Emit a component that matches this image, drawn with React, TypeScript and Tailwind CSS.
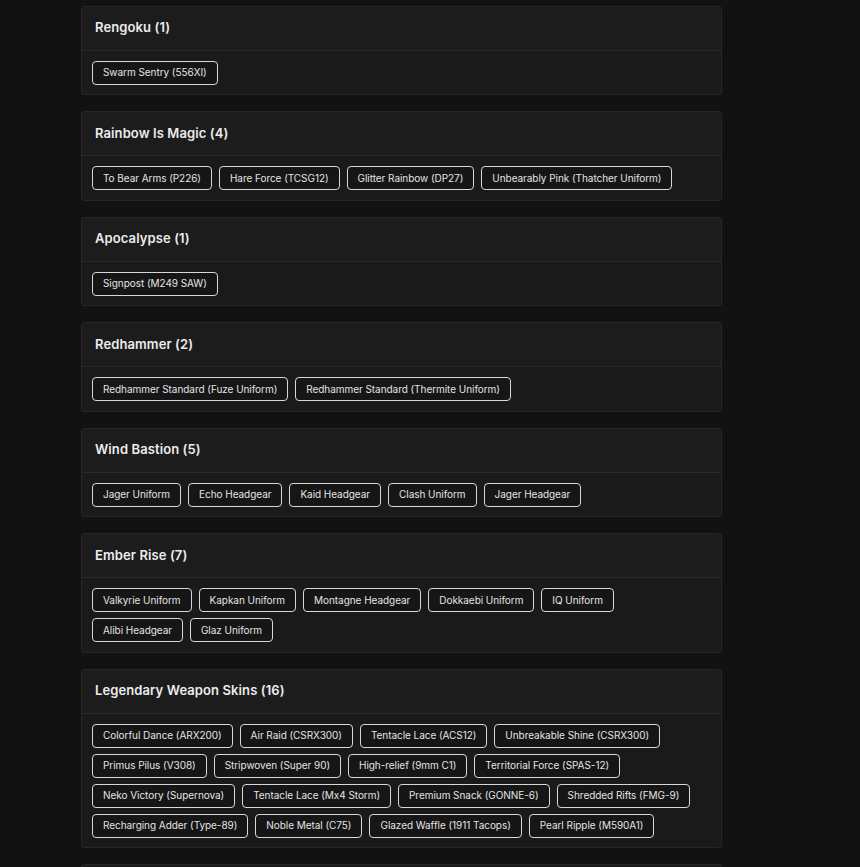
const groups: { title: string; items: string[] }[] = [
  { title: "Rengoku (1)", items: ["Swarm Sentry (556XI)"] },
  {
    title: "Rainbow Is Magic (4)",
    items: ["To Bear Arms (P226)", "Hare Force (TCSG12)", "Glitter Rainbow (DP27)", "Unbearably Pink (Thatcher Uniform)"],
  },
  { title: "Apocalypse (1)", items: ["Signpost (M249 SAW)"] },
  { title: "Redhammer (2)", items: ["Redhammer Standard (Fuze Uniform)", "Redhammer Standard (Thermite Uniform)"] },
  {
    title: "Wind Bastion (5)",
    items: ["Jager Uniform", "Echo Headgear", "Kaid Headgear", "Clash Uniform", "Jager Headgear"],
  },
  {
    title: "Ember Rise (7)",
    items: ["Valkyrie Uniform", "Kapkan Uniform", "Montagne Headgear", "Dokkaebi Uniform", "IQ Uniform", "Alibi Headgear", "Glaz Uniform"],
  },
  {
    title: "Legendary Weapon Skins (16)",
    items: [
      "Colorful Dance (ARX200)",
      "Air Raid (CSRX300)",
      "Tentacle Lace (ACS12)",
      "Unbreakable Shine (CSRX300)",
      "Primus Pilus (V308)",
      "Stripwoven (Super 90)",
      "High-relief (9mm C1)",
      "Territorial Force (SPAS-12)",
      "Neko Victory (Supernova)",
      "Tentacle Lace (Mx4 Storm)",
      "Premium Snack (GONNE-6)",
      "Shredded Rifts (FMG-9)",
      "Recharging Adder (Type-89)",
      "Noble Metal (C75)",
      "Glazed Waffle (1911 Tacops)",
      "Pearl Ripple (M590A1)",
    ],
  },
]

export default function App() {
  return (
    <div className="min-h-[867px] bg-[#121212] pt-[5.5px] font-['Inter',sans-serif] text-[#e6e6e6]">
      <div className="ml-[81px] flex w-[641px] flex-col gap-4">
        {groups.map((g) => (
          <div key={g.title} className="rounded-[3px] border border-[#272727] bg-[#1a1a1a]">
            {/* Header */}
            <div className="flex h-[44px] items-center border-b border-[#2a2a2a] bg-[#1c1c1c] px-[13px]">
              <h3 className="text-[13px] font-semibold tracking-[0.1px] text-[#ececec]">{g.title}</h3>
            </div>
            {/* Chips */}
            <div className="flex flex-wrap gap-x-[7px] gap-y-[6px] px-[10px] pb-[9.5px] pt-[10px]">
              {g.items.map((it, i) => (
                <span
                  key={i}
                  className="inline-flex h-[24px] items-center rounded-[4px] border border-[#d8d8d8] bg-[#161616] px-[10px] text-[10px] tracking-[-0.05px] text-[#e4e4e4]"
                >
                  {it}
                </span>
              ))}
            </div>
          </div>
        ))}
        {/* next group, scrolled below the fold */}
        <div className="h-[90px] rounded-[3px] border border-[#272727] bg-[#1a1a1a]">
          <div className="h-[44px] border-b border-[#2a2a2a] bg-[#1c1c1c]" />
        </div>
      </div>
    </div>
  )
}
